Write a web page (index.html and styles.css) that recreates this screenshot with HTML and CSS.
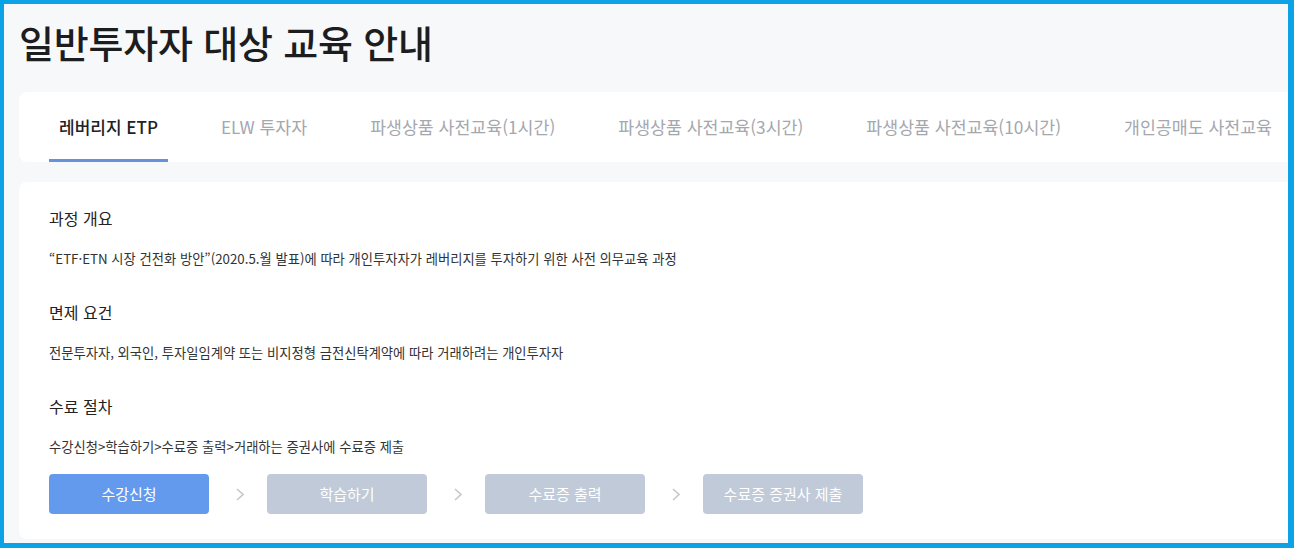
FILE: index.html
```html
<!DOCTYPE html>
<html lang="ko">
<head>
<meta charset="utf-8">
<link rel="stylesheet" href="styles.css">
</head>
<body>
<div class="frame">
  <h1 class="title">일반투자자 대상 교육 안내</h1>
  <nav class="tabs">
    <div class="tab active">레버리지 ETP</div>
    <div class="tab">ELW 투자자</div>
    <div class="tab">파생상품 사전교육(1시간)</div>
    <div class="tab">파생상품 사전교육(3시간)</div>
    <div class="tab">파생상품 사전교육(10시간)</div>
    <div class="tab">개인공매도 사전교육</div>
  </nav>
  <section class="card">
    <h2 class="heading">과정 개요</h2>
    <p class="text">“ETF·ETN 시장 건전화 방안”(2020.5.월 발표)에 따라 개인투자자가 레버리지를 투자하기 위한 사전 의무교육 과정</p>
    <h2 class="heading">면제 요건</h2>
    <p class="text">전문투자자, 외국인, 투자일임계약 또는 비지정형 금전신탁계약에 따라 거래하려는 개인투자자</p>
    <h2 class="heading">수료 절차</h2>
    <p class="text">수강신청&gt;학습하기&gt;수료증 출력&gt;거래하는 증권사에 수료증 제출</p>
    <div class="steps">
      <div class="step current">수강신청</div>
      <span class="arrow"><svg width="10" height="13" viewBox="0 0 10 13"><polyline points="2,1 8,6.5 2,12" fill="none" stroke="#c3c7ce" stroke-width="1.6"/></svg></span>
      <div class="step">학습하기</div>
      <span class="arrow"><svg width="10" height="13" viewBox="0 0 10 13"><polyline points="2,1 8,6.5 2,12" fill="none" stroke="#c3c7ce" stroke-width="1.6"/></svg></span>
      <div class="step">수료증 출력</div>
      <span class="arrow"><svg width="10" height="13" viewBox="0 0 10 13"><polyline points="2,1 8,6.5 2,12" fill="none" stroke="#c3c7ce" stroke-width="1.6"/></svg></span>
      <div class="step">수료증 증권사 제출</div>
    </div>
  </section>
</div>
</body>
</html>
```

FILE: styles.css
```css
* { box-sizing: border-box; }
html, body { margin: 0; padding: 0; }
body {
  font-family: "Noto Sans CJK KR", "Noto Sans", sans-serif;
  color: #222;
}
.frame {
  width: 1294px;
  height: 548px;
  border-style: solid;
  border-color: #0ba2e6;
  border-width: 4px 6px 5px 4px;
  background: #f7f8fa;
  padding: 0 0 4px 15px;
  display: flex;
  flex-direction: column;
  overflow: hidden;
}
.title {
  margin: 0;
  height: 88px;
  padding-top: 14px;
  font-size: 38px;
  font-weight: 500;
  line-height: 48px;
  color: #1d1d1f;
  letter-spacing: -0.2px;
  white-space: nowrap;
}
.tabs {
  height: 70px;
  background: #fff;
  border-radius: 8px 0 0 8px;
  display: flex;
  gap: 43px;
  padding-left: 30px;
  white-space: nowrap;
}
.tab {
  padding: 0 10px;
  height: 70px;
  line-height: 70px;
  font-size: 17.3px;
  color: #a4a7ae;
  border-bottom: 3px solid transparent;
}
.tab.active {
  font-size: 17px;
  color: #222;
  font-weight: 500;
  border-bottom-color: #6692dd;
}
.card {
  margin-top: 20px;
  flex: 1;
  background: #fff;
  border-radius: 8px 0 0 8px;
  padding: 24px 30px 0 30px;
}
.heading {
  margin: 0;
  font-size: 16px;
  font-weight: 400;
  line-height: 24px;
  color: #222;
}
.text {
  margin: 19px 0 31px;
  font-size: 13.3px;
  line-height: 20px;
  color: #333;
  white-space: nowrap;
}
.steps {
  display: flex;
  align-items: center;
  margin-top: -14px;
}
.step {
  width: 160px;
  height: 40px;
  border-radius: 4px;
  background: #c0cad8;
  color: #fff;
  font-size: 15px;
  line-height: 40px;
  text-align: center;
}
.step.current { background: #649aee; }
.arrow {
  width: 58px;
  display: flex;
  justify-content: center;
}
.arrow svg { display: block; margin-left: 4px; }
```
